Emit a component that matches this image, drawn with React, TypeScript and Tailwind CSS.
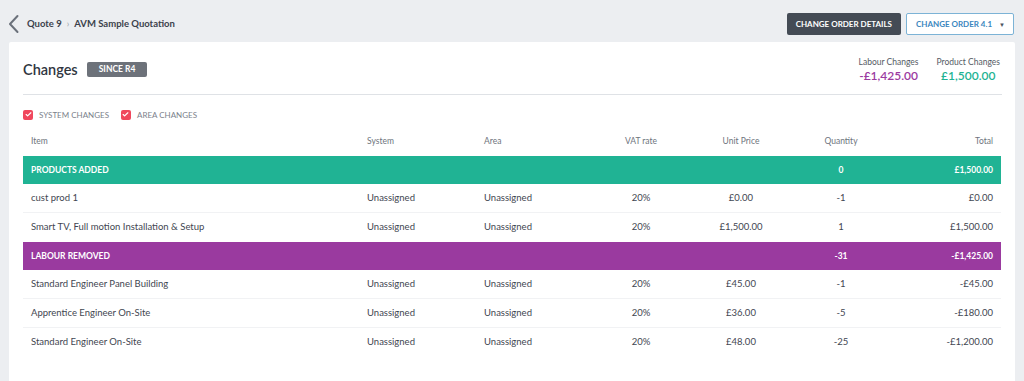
import { Check } from "lucide-react";

type Row = { item: string; system: string; area: string; vat: string; unit: string; qty: string; total: string };

const products: Row[] = [
  { item: "cust prod 1", system: "Unassigned", area: "Unassigned", vat: "20%", unit: "£0.00", qty: "-1", total: "£0.00" },
  { item: "Smart TV, Full motion Installation & Setup", system: "Unassigned", area: "Unassigned", vat: "20%", unit: "£1,500.00", qty: "1", total: "£1,500.00" },
];

const labour: Row[] = [
  { item: "Standard Engineer Panel Building", system: "Unassigned", area: "Unassigned", vat: "20%", unit: "£45.00", qty: "-1", total: "-£45.00" },
  { item: "Apprentice Engineer On-Site", system: "Unassigned", area: "Unassigned", vat: "20%", unit: "£36.00", qty: "-5", total: "-£180.00" },
  { item: "Standard Engineer On-Site", system: "Unassigned", area: "Unassigned", vat: "20%", unit: "£48.00", qty: "-25", total: "-£1,200.00" },
];

const cols = "grid grid-cols-[336px_117px_115px_100px_100px_100px_110px]";

function Band({ label, qty, total, color }: { label: string; qty: string; total: string; color: string }) {
  return (
    <div className={`${cols} h-[28px] items-center text-white font-bold text-[8.5px] ${color}`}>
      <div className="pl-2 uppercase">{label}</div>
      <div />
      <div />
      <div />
      <div />
      <div className="text-center">{qty}</div>
      <div className="text-right pr-2">{total}</div>
    </div>
  );
}

function Line({ r, last }: { r: Row; last?: boolean }) {
  return (
    <div className={`${cols} h-[29px] items-center text-[9.5px] text-[#3f4651] ${last ? "" : "border-b border-[#f1f2f4]"}`}>
      <div className="pl-2">{r.item}</div>
      <div className="pl-2">{r.system}</div>
      <div className="pl-2">{r.area}</div>
      <div className="text-center">{r.vat}</div>
      <div className="text-center">{r.unit}</div>
      <div className="text-center">{r.qty}</div>
      <div className="text-right pr-2">{r.total}</div>
    </div>
  );
}

function Tick({ label }: { label: string }) {
  return (
    <div className="flex items-center gap-[6px]">
      <div className="w-[10px] h-[10px] rounded-[2px] bg-[#f0475d] flex items-center justify-center">
        <Check className="w-[7px] h-[7px] text-white" strokeWidth={4} />
      </div>
      <span className="text-[8px] text-[#7b818b] uppercase">{label}</span>
    </div>
  );
}

export default function App() {
  return (
    <div className="w-[1024px] h-[381px] bg-[#eceef1] font-['Lato',sans-serif] overflow-hidden">
      <header className="h-[42px] flex items-center justify-between pl-[8px] pr-[10px] pt-[6px]">
        <div className="flex items-center">
          <svg width="12" height="20" viewBox="0 0 12 20" className="mr-[7px]">
            <polyline points="9.5,2 2,10 9.5,18" fill="none" stroke="#6b717b" strokeWidth="2" strokeLinecap="round" strokeLinejoin="round" />
          </svg>
          <span className="text-[9.5px] font-bold text-[#3b414b]">Quote 9</span>
          <span className="text-[9px] text-[#9aa0a8] mx-[5px]">›</span>
          <span className="text-[9.5px] font-bold text-[#3b414b]">AVM Sample Quotation</span>
        </div>
        <div className="flex items-center gap-[5px]">
          <button className="h-[22px] px-[9px] rounded-[2px] bg-[#444b55] text-white text-[8px] font-bold uppercase">
            Change Order Details
          </button>
          <button className="h-[22px] pl-[9px] pr-[8px] rounded-[2px] bg-white border border-[#7cb3d6] text-[#3b86be] text-[8px] font-bold uppercase flex items-center gap-[7px]">
            Change Order 4.1
            <span className="text-[6px] text-[#4a5560]">▼</span>
          </button>
        </div>
      </header>

      <main className="mx-[9px] bg-white rounded-t-[2px] h-[339px] px-[14px] pt-[14px]">
        <div className="flex items-start justify-between h-[39px] border-b border-[#dfe2e6] mr-[-1px]">
          <div className="flex items-center pt-[3px]">
            <h1 className="text-[14.5px] font-semibold text-[#30363f]">Changes</h1>
            <span className="ml-[9px] px-[12px] h-[15px] leading-[15px] rounded-[2px] bg-[#6d727a] text-white text-[8.5px] font-bold uppercase">Since R4</span>
          </div>
          <div className="flex gap-[18px] pr-[2px] pt-[1px]">
            <div className="text-center leading-tight">
              <div className="text-[8.5px] text-[#555b64]">Labour Changes</div>
              <div className="text-[12px] font-semibold text-[#9b3a9f]">-£1,425.00</div>
            </div>
            <div className="text-center leading-tight">
              <div className="text-[8.5px] text-[#555b64]">Product Changes</div>
              <div className="text-[12px] font-semibold text-[#1fb393]">£1,500.00</div>
            </div>
          </div>
        </div>

        <div className="flex items-center gap-[12px] h-[39px]">
          <Tick label="System Changes" />
          <Tick label="Area Changes" />
        </div>

        <div className={`${cols} h-[22px] items-start pt-[1px] text-[8.5px] text-[#6e747d]`}>
          <div className="pl-2">Item</div>
          <div className="pl-2">System</div>
          <div className="pl-2">Area</div>
          <div className="text-center">VAT rate</div>
          <div className="text-center">Unit Price</div>
          <div className="text-center">Quantity</div>
          <div className="text-right pr-2">Total</div>
        </div>

        <Band label="Products Added" qty="0" total="£1,500.00" color="bg-[#20b394]" />
        {products.map((r, i) => (
          <Line key={r.item} r={r} last={i === products.length - 1} />
        ))}
        <Band label="Labour Removed" qty="-31" total="-£1,425.00" color="bg-[#9a3a9f]" />
        {labour.map((r, i) => (
          <Line key={r.item} r={r} last={i === labour.length - 1} />
        ))}
      </main>
    </div>
  );
}
